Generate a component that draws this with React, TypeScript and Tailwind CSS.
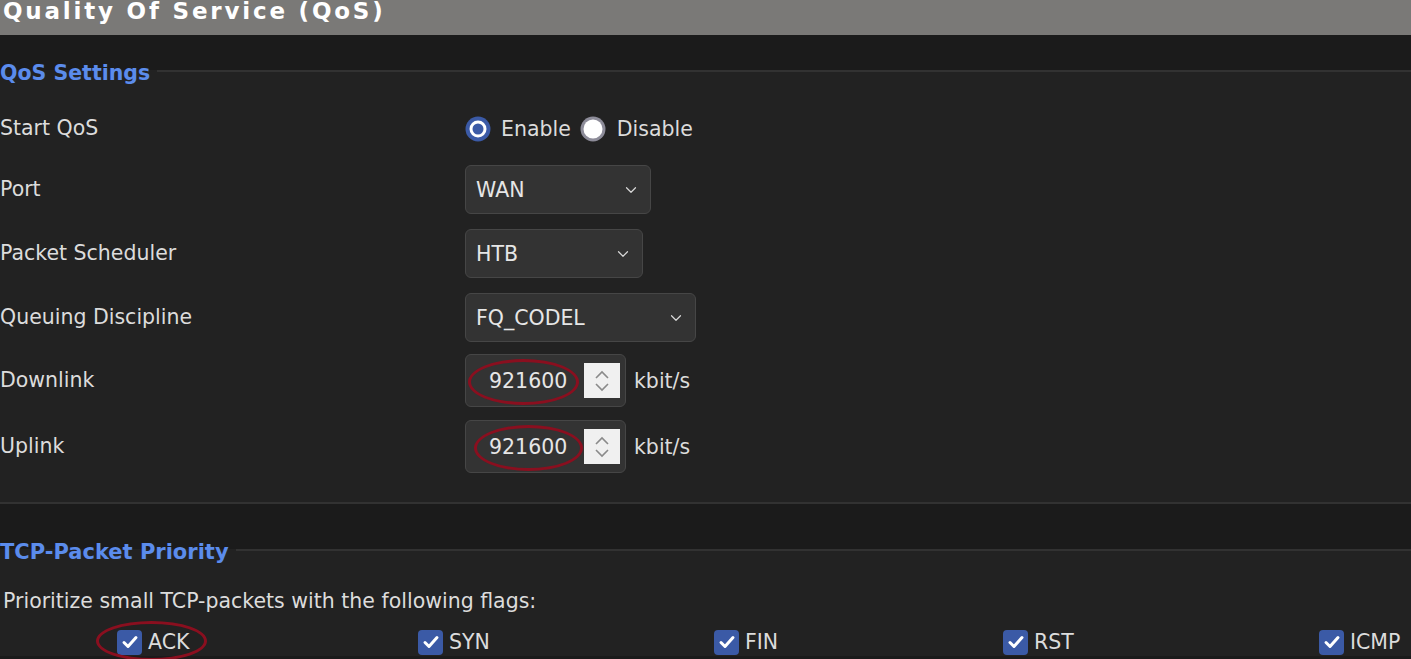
import { ChevronDown } from 'lucide-react';

const FONT = "font-['DejaVu_Sans',sans-serif]";

function Radio({ checked }: { checked: boolean }) {
  return (
    <svg width="26" height="26" viewBox="0 0 26 26" className="shrink-0">
      {checked ? (
        <>
          <circle cx="13" cy="13" r="12.5" fill="#3b5aa6" />
          <circle cx="13" cy="13" r="8.5" fill="#ffffff" />
          <circle cx="13" cy="13" r="5.5" fill="#3b5aa6" />
        </>
      ) : (
        <>
          <circle cx="13" cy="13" r="12.5" fill="#8d8c99" />
          <circle cx="13" cy="13" r="9.5" fill="#ffffff" />
        </>
      )}
    </svg>
  );
}

function Select({ value, width }: { value: string; width: string }) {
  return (
    <div
      className={`${width} h-[49px] flex items-center justify-between pl-[10px] pr-[10px] rounded-[6px] bg-[#333333] border border-[#464646] text-[#e6e6e6]`}
    >
      <span>{value}</span>
      <ChevronDown size={18} strokeWidth={1.6} className="text-[#d8d8d8]" />
    </div>
  );
}

function NumberInput({ value, ringClass }: { value: string; ringClass: string }) {
  return (
    <div className="flex items-center gap-[8px]">
      <div className="relative w-[161px] h-[53px] flex items-center pl-[23px] pr-[5px] justify-between rounded-[6px] bg-[#333333] border border-[#464646] text-[#e6e6e6]">
        <span>{value}</span>
        <div className="w-[36px] h-[35px] bg-[#f0f0f0] flex flex-col items-center justify-center">
          <svg width="18" height="26" viewBox="0 0 18 26">
            <path d="M3 10 L9 4 L15 10" fill="none" stroke="#8a8a8a" strokeWidth="1.6" />
            <path d="M3 16 L9 22 L15 16" fill="none" stroke="#8a8a8a" strokeWidth="1.6" />
          </svg>
        </div>
        {/* red annotation ellipse */}
        <div className={`absolute ${ringClass} rounded-[50%] border-[3px] border-[#8a0f1f]`} />
      </div>
      <span>kbit/s</span>
    </div>
  );
}

function Checkbox({ label, ring }: { label: string; ring?: boolean }) {
  return (
    <div className="relative flex items-center gap-[6px]">
      <div className="w-[25px] h-[25px] rounded-[4px] bg-[#3b5aa6] flex items-center justify-center">
        <svg width="20" height="20" viewBox="0 0 20 20">
          <path d="M4 10.5 L8 14.5 L16 5.5" fill="none" stroke="#ffffff" strokeWidth="3" strokeLinecap="round" strokeLinejoin="round" />
        </svg>
      </div>
      <span>{label}</span>
      {ring && (
        <div className="absolute left-[-21px] top-[-7px] w-[111px] h-[40px] rounded-[50%] border-[3px] border-[#8a0f1f]" />
      )}
    </div>
  );
}

function Row({ label, children, className }: { label: string; children: React.ReactNode; className?: string }) {
  return (
    <div className={`flex items-center ${className ?? ''}`}>
      <div className="w-[465px] shrink-0 -mt-[2px]">{label}</div>
      {children}
    </div>
  );
}

export default function App() {
  return (
    <div className={`w-[1411px] h-[659px] overflow-hidden bg-[#1b1b1b] text-[20.5px] leading-[28px] text-[#dcdcdc] ${FONT}`}>
      {/* Title bar */}
      <div className="h-[35px] bg-[#7a7977] overflow-hidden">
        <h1 className="pl-[3px] -mt-[4px] text-[23px] leading-[30px] font-bold tracking-[2.8px] text-white whitespace-nowrap">
          Quality Of Service (QoS)
        </h1>
      </div>

      {/* QoS Settings */}
      <fieldset className="mt-[22px] bg-[#222222] border-t-2 border-b-2 border-[#323232] pt-[29px] pb-[29px]">
        <legend className="pr-[7px] pt-[4px] font-bold text-[#5b8cec] text-[20.5px] leading-[24px]">QoS Settings</legend>

        <Row label="Start QoS" className="h-[30px]">
          <div className="flex items-center">
            <Radio checked />
            <span className="ml-[10px] mr-[9px]">Enable</span>
            <Radio checked={false} />
            <span className="ml-[11px]">Disable</span>
          </div>
        </Row>

        <Row label="Port" className="mt-[21px]">
          <Select value="WAN" width="w-[186px]" />
        </Row>

        <Row label="Packet Scheduler" className="mt-[15px]">
          <Select value="HTB" width="w-[178px]" />
        </Row>

        <Row label="Queuing Discipline" className="mt-[15px]">
          <Select value="FQ_CODEL" width="w-[231px]" />
        </Row>

        <Row label="Downlink" className="mt-[12px]">
          <NumberInput value="921600" ringClass="left-[2px] top-[4px] w-[111px] h-[46px]" />
        </Row>

        <Row label="Uplink" className="mt-[13px]">
          <NumberInput value="921600" ringClass="left-[8px] top-[4px] w-[109px] h-[46px]" />
        </Row>
      </fieldset>

      {/* TCP-Packet Priority */}
      <fieldset className="mt-[32px] bg-[#222222] border-t-2 border-[#323232] pt-[23px]">
        <legend className="pr-[7px] pt-[4px] font-bold text-[#5b8cec] text-[21px] leading-[24px]">TCP-Packet Priority</legend>
        <p className="pl-[3px]">Prioritize small TCP-packets with the following flags:</p>
        <div className="mt-[13px] pl-[117px] grid grid-cols-[301px_296px_289px_316px_auto]">
          <Checkbox label="ACK" ring />
          <Checkbox label="SYN" />
          <Checkbox label="FIN" />
          <Checkbox label="RST" />
          <Checkbox label="ICMP" />
        </div>
      </fieldset>
    </div>
  );
}
